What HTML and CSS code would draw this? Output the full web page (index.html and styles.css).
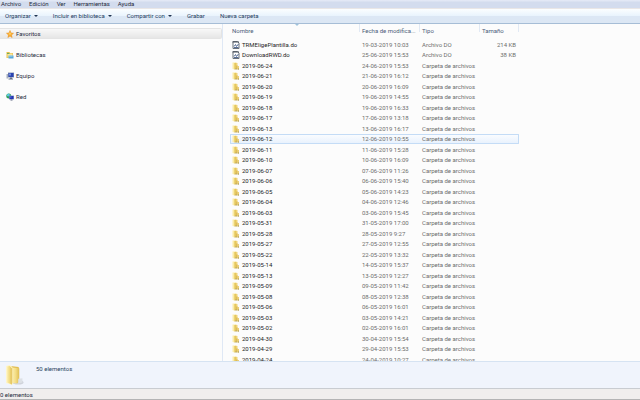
FILE: index.html
```
<!DOCTYPE html>
<html lang="es">
<head>
<meta charset="utf-8">
<title>Explorador</title>
<link rel="stylesheet" href="styles.css">
</head>
<body>
<svg class="defs" aria-hidden="true">
  <defs>
    <linearGradient id="gold" x1="0" x2="1" y1="0" y2="0">
      <stop offset="0" stop-color="#fbeeae"/><stop offset=".5" stop-color="#f3dc83"/><stop offset="1" stop-color="#dfbd52"/>
    </linearGradient>
    <symbol id="folder" viewBox="0 0 14 16">
      <path fill="#f0d479" d="M5 1l5 1v12H5z"/>
      <path fill="#fbeca8" d="M0 1h5v14l-5-1z"/>
      <path fill="#dcb944" d="M4 2h2v13H4z"/>
      <path fill="#c9a43a" d="M8 7h2v8H8z"/>
      <path fill="#ecd075" d="M10 8h3v7h-3z"/>
      <path fill="#9c9260" d="M6 13h2v2H6zM11 13h2v2h-2z"/>
    </symbol>
    <symbol id="file" viewBox="0 0 16 16">
      <path fill="#fff" stroke="#697078" stroke-width="2" d="M2 1h9l3 3v11H2z"/>
      <path fill="#48505c" d="M1 1h13v2H1z"/>
      <path fill="none" stroke="#596f97" stroke-width="2" d="M4 11l3-4 2 4 4-5M4 13h9"/>
    </symbol>
  </defs>
</svg>
<nav class="menubar" aria-label="Menú">
  <button>Archivo</button><button>Edición</button><button>Ver</button><button>Herramientas</button><button>Ayuda</button>
</nav>
<div class="toolbar">
  <button>Organizar<i class="arrow"></i></button>
  <button>Incluir en biblioteca<i class="arrow"></i></button>
  <button>Compartir con<i class="arrow"></i></button>
  <button>Grabar</button>
  <button>Nueva carpeta</button>
</div>
<div class="content">
  <nav class="sidebar" aria-label="Ubicaciones">
    <a class="current" href="#favoritos"><svg viewBox="0 0 16 16"><path fill="#fcae2c" stroke="#e58a1c" d="M8 1l2 5 5 .5-4 3.500 1.300 5L8 12.200 3.700 15 5 10 1 6.500 6 6z"/><path fill="#ffd978" d="M8 4l1 3 2 .5-3 2-3-2L7 7z"/></svg>Favoritos</a>
    <a href="#bibliotecas"><svg viewBox="0 0 16 16"><path fill="#e9bf4c" d="M1 2h6l1 2h6v10H1z"/><path fill="#fae69a" d="M3 5h10v8H3z"/><path fill="#58a9dc" d="M5 9h10v6H5z"/><path fill="#a9d8ec" d="M6 9h7v2H6z"/><path fill="#6fae5c" d="M2 4h5v2H2z"/></svg>Bibliotecas</a>
    <a href="#equipo"><svg viewBox="0 0 16 16"><path fill="#a5adbd" d="M1 4h3v9H1z"/><path fill="#8d99b3" d="M4 1h12v10H4z"/><path fill="#2b43b0" d="M5 2h10v8H5z"/><path fill="#7590dc" d="M6 3h4v4H6z"/><path fill="#68728a" d="M8 11h4v2h2v2H5v-2h3z"/></svg>Equipo</a>
    <a href="#red"><svg viewBox="0 0 16 16"><circle cx="5.500" cy="6" r="5" fill="#2e9e5a"/><path fill="#58c9e4" d="M2 3l4-2 2 3-3 3-3-1z"/><path fill="#93a2c4" d="M6 5h10v8H6z"/><path fill="#2336b4" d="M7 6h8v6H7z"/><path fill="#6a84e0" d="M8 7h3v2H8z"/><path fill="#5c6680" d="M9 13h4v2H9z"/></svg>Red</a>
  </nav>
  <main class="list">
    <table>
      <colgroup><col class="c-name"><col class="c-date"><col class="c-type"><col class="c-size"></colgroup>
      <thead><tr><th class="sorted">Nombre</th><th>Fecha de modifica...</th><th>Tipo</th><th>Tamaño</th></tr></thead>
      <tbody id="rows"></tbody>
    </table>
  </main>
</div>
<section class="details">
  <svg viewBox="0 0 36 40"><ellipse cx="25" cy="34" rx="10" ry="4" fill="#cfd3da"/><path fill="#e2bd50" d="M10 3l16 2v29l-16 2z"/><path fill="url(#gold)" d="M14 6l13 1v22l-4 7-9-1z"/><path fill="#fff5c6" d="M2 3l7-2 5 4v34L2 35z"/><path fill="url(#gold)" d="M4 4l5-1 4 4v31l-9-4z"/><path fill="#dde1e6" d="M25 27l8-1v8l-8 2z"/></svg>
  <p>50 elementos</p>
</section>
<footer class="status">0 elementos</footer>
<script src="rows.js"></script>
</body>
</html>
```
FILE: styles.css
```
* { box-sizing: border-box; }
body {
  margin: 0;
  height: 100vh;
  display: flex;
  flex-direction: column;
  overflow: hidden;
  background: #fcfcfc;
  color: #1e2a3c;
  font: 6px/10px Roboto, "Open Sans", sans-serif;
}
.defs { position: absolute; width: 0; height: 0; }
button {
  padding: 0;
  border: 0;
  background: none;
  color: inherit;
  font: inherit;
}
.menubar {
  display: flex;
  flex: none;
  gap: 8px;
  height: 9px;
  padding-left: 1px;
  line-height: 8px;
  background: linear-gradient(#e6ebf7, #d3dcee 30%, #d3dcee);
  border-bottom: 1px solid #e9e6e6;
}
.menubar button { display: block; height: 8px; }
.toolbar {
  display: flex;
  flex: none;
  align-items: center;
  gap: 15px;
  height: 15px;
  padding-left: 5px;
  color: #24405f;
  background: linear-gradient(#fbfeff, #e9f3fd 50%, #dce7f5 50%, #dce7f4);
  border-bottom: 1px solid #a6bdd6;
}
.arrow {
  display: inline-block;
  margin-left: 3px;
  border: 2px solid transparent;
  border-top-color: #1e3350;
  border-bottom: 0;
  vertical-align: 1px;
}
.content { display: flex; flex: 1; min-height: 0; }
.sidebar {
  display: flex;
  flex-direction: column;
  flex: 0 0 35%;
  gap: 10px;
  max-width: 223px;
  padding-top: 4px;
  border-right: 1px solid #dfe8f5;
}
.sidebar a {
  display: flex;
  align-items: center;
  gap: 2px;
  height: 11px;
  padding-left: 6px;
  color: #1e2a3c;
  text-decoration: none;
}
.sidebar svg { width: 8px; height: 8px; }
.sidebar .current {
  background: linear-gradient(#f8f8f8, #e6e6e6);
  border: 1px solid #e4e4e4;
  border-left: 0;
  border-radius: 0 2px 2px 0;
}
.list { flex: 1; min-width: 0; padding-left: 7px; overflow: hidden; }
table {
  width: 289px;
  border-collapse: separate;
  border-spacing: 0;
  table-layout: fixed;
}
.c-name { width: 130px; }
.c-date, .c-type { width: 60px; }
.c-size { width: 39px; }
th {
  height: 15px;
  padding: 0 2px 2px;
  color: #4c607a;
  font-weight: 400;
  text-align: left;
  white-space: nowrap;
  background: linear-gradient(#e1e9f4, #e1e9f4) right top / 1px 8px no-repeat;
}
.sorted { position: relative; }
.sorted::after {
  content: "";
  position: absolute;
  top: 0;
  left: 50%;
  border: 2px solid transparent;
  border-top-color: #9fc3dc;
  border-bottom: 0;
}
td {
  height: 10px;
  padding: 0 2px;
  color: #6d6d6d;
  white-space: nowrap;
}
tr:nth-child(odd) td { height: 11px; }
td:first-child { color: #1c1c1c; }
td:last-child { padding-right: 3px; text-align: right; }
.name { display: flex; align-items: center; gap: 2px; height: 10px; }
.name svg { width: 8px; height: 8px; }
.hover td {
  background: linear-gradient(#fafcff, #e9f2fd);
  border: 1px solid #c4dcf6;
  border-width: 1px 0;
  line-height: 8px;
}
.hover .name { height: 8px; }
.hover td:first-child { padding-left: 1px; border-left-width: 1px; border-radius: 1px 0 0 1px; }
.hover td:last-child { border-right-width: 1px; border-radius: 0 1px 1px 0; }
.details {
  display: flex;
  flex: none;
  gap: 12px;
  height: 27px;
  padding: 2px 5px;
  color: #2c4560;
  background: #f0f4fc;
  border-top: 1px solid #d6e3f2;
}
.details svg { width: 19px; height: 22px; }
.details p { margin: 0; }
.status {
  flex: none;
  height: 12px;
  line-height: 11px;
  background: #f0eeed;
  border-top: 1px solid #c9ccd1;
  border-bottom: 1px solid #b4b4b4;
}
```
FILE: rows.js
```
const files = [
  ["TRMEligePlantilla.do", "19-03-2019 10:03", "214 KB"],
  ["DownloadRWD.do", "25-06-2019 15:53", "38 KB"]
];
const folders = [
  ["2019-06-24", "15:53"], ["2019-06-21", "16:12"], ["2019-06-20", "16:09"],
  ["2019-06-19", "14:55"], ["2019-06-18", "16:33", "19-06-2019"], ["2019-06-17", "13:18"],
  ["2019-06-13", "16:17"], ["2019-06-12", "10:55"], ["2019-06-11", "15:28"],
  ["2019-06-10", "16:09"], ["2019-06-07", "11:26"], ["2019-06-06", "15:40"],
  ["2019-06-05", "14:23"], ["2019-06-04", "12:46"], ["2019-06-03", "15:45"],
  ["2019-05-31", "17:00"], ["2019-05-28", "9:27"], ["2019-05-27", "12:55"],
  ["2019-05-22", "13:32"], ["2019-05-14", "15:37"], ["2019-05-13", "12:27"],
  ["2019-05-09", "11:42"], ["2019-05-08", "12:38"], ["2019-05-06", "16:01"],
  ["2019-05-03", "14:21"], ["2019-05-02", "16:01"], ["2019-04-30", "15:54"],
  ["2019-04-29", "15:53"], ["2019-04-24", "10:27"]
];
const row = (icon, name, date, type, size, cls) =>
  `<tr class="${cls}"><td><div class="name"><svg><use href="#${icon}"/></svg>${name}</div></td><td>${date}</td><td>${type}</td><td>${size}</td></tr>`;

document.getElementById("rows").innerHTML =
  files.map(([n, d, s]) => row("file", n, d, "Archivo DO", s, "")).join("") +
  folders.map(([n, t, d]) => {
    const day = d || n.split("-").reverse().join("-");
    return row("folder", n, `${day} ${t}`, "Carpeta de archivos", "", n === "2019-06-12" ? "hover" : "");
  }).join("");
```
